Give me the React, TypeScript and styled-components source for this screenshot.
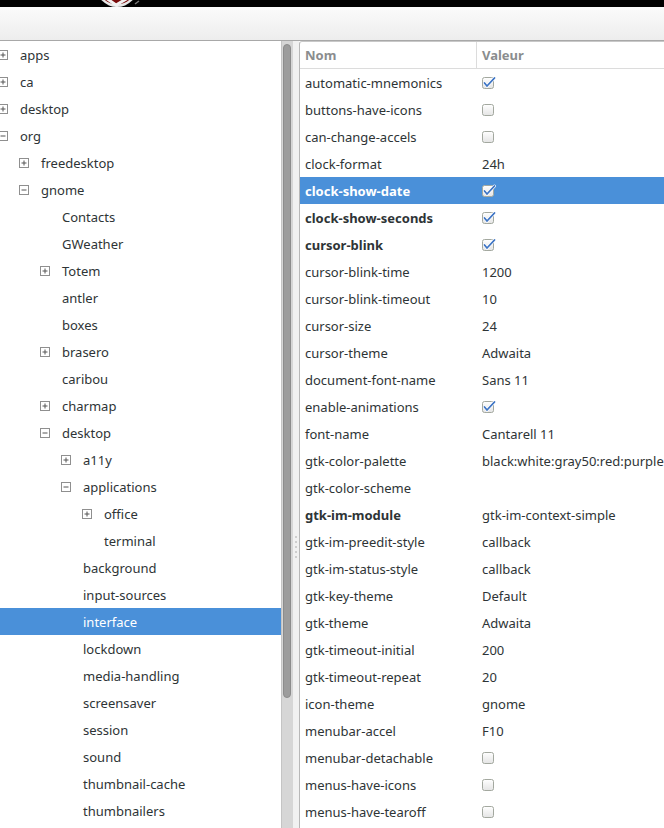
import React from 'react';
import styled, { createGlobalStyle } from 'styled-components';

const GlobalStyle = createGlobalStyle`
  html, body {
    margin: 0;
    padding: 0;
    background: #ffffff;
  }
  body {
    font-family: "Noto Sans", "DejaVu Sans", sans-serif;
    font-size: 13px;
    color: #2e3436;
    overflow: hidden;
  }
`;

type TreeNode = {
  label: string;
  level: number;
  expander?: 'plus' | 'minus';
  selected?: boolean;
};

const treeData: TreeNode[] = [
  { label: 'apps', level: 0, expander: 'plus' },
  { label: 'ca', level: 0, expander: 'plus' },
  { label: 'desktop', level: 0, expander: 'plus' },
  { label: 'org', level: 0, expander: 'minus' },
  { label: 'freedesktop', level: 1, expander: 'plus' },
  { label: 'gnome', level: 1, expander: 'minus' },
  { label: 'Contacts', level: 2 },
  { label: 'GWeather', level: 2 },
  { label: 'Totem', level: 2, expander: 'plus' },
  { label: 'antler', level: 2 },
  { label: 'boxes', level: 2 },
  { label: 'brasero', level: 2, expander: 'plus' },
  { label: 'caribou', level: 2 },
  { label: 'charmap', level: 2, expander: 'plus' },
  { label: 'desktop', level: 2, expander: 'minus' },
  { label: 'a11y', level: 3, expander: 'plus' },
  { label: 'applications', level: 3, expander: 'minus' },
  { label: 'office', level: 4, expander: 'plus' },
  { label: 'terminal', level: 4 },
  { label: 'background', level: 3 },
  { label: 'input-sources', level: 3 },
  { label: 'interface', level: 3, selected: true },
  { label: 'lockdown', level: 3 },
  { label: 'media-handling', level: 3 },
  { label: 'screensaver', level: 3 },
  { label: 'session', level: 3 },
  { label: 'sound', level: 3 },
  { label: 'thumbnail-cache', level: 3 },
  { label: 'thumbnailers', level: 3 },
];

type KeyRow = {
  name: string;
  value?: string;
  check?: boolean;
  bold?: boolean;
  selected?: boolean;
};

const keyData: KeyRow[] = [
  { name: 'automatic-mnemonics', check: true },
  { name: 'buttons-have-icons', check: false },
  { name: 'can-change-accels', check: false },
  { name: 'clock-format', value: '24h' },
  { name: 'clock-show-date', check: true, bold: true, selected: true },
  { name: 'clock-show-seconds', check: true, bold: true },
  { name: 'cursor-blink', check: true, bold: true },
  { name: 'cursor-blink-time', value: '1200' },
  { name: 'cursor-blink-timeout', value: '10' },
  { name: 'cursor-size', value: '24' },
  { name: 'cursor-theme', value: 'Adwaita' },
  { name: 'document-font-name', value: 'Sans 11' },
  { name: 'enable-animations', check: true },
  { name: 'font-name', value: 'Cantarell 11' },
  {
    name: 'gtk-color-palette',
    value:
      'black:white:gray50:red:purple:blue:light blue:green:yellow:orange:lavender:brown:goldenrod4:dodger blue:pink:light green:gray10:gray30:gray75:gray90',
  },
  { name: 'gtk-color-scheme', value: '' },
  { name: 'gtk-im-module', value: 'gtk-im-context-simple', bold: true },
  { name: 'gtk-im-preedit-style', value: 'callback' },
  { name: 'gtk-im-status-style', value: 'callback' },
  { name: 'gtk-key-theme', value: 'Default' },
  { name: 'gtk-theme', value: 'Adwaita' },
  { name: 'gtk-timeout-initial', value: '200' },
  { name: 'gtk-timeout-repeat', value: '20' },
  { name: 'icon-theme', value: 'gnome' },
  { name: 'menubar-accel', value: 'F10' },
  { name: 'menubar-detachable', check: false },
  { name: 'menus-have-icons', check: false },
  { name: 'menus-have-tearoff', check: false },
];

const Window = styled.div`
  width: 664px;
  height: 828px;
  display: flex;
  flex-direction: column;
  overflow: hidden;
`;

const TopBar = styled.div`
  height: 7px;
  background: #000000;
  display: flex;
  padding-left: 97px;
  flex-shrink: 0;
`;

const Toolbar = styled.div`
  height: 33px;
  flex-shrink: 0;
  background: linear-gradient(to bottom, #fbfbfb, #ededed);
  border-bottom: 1px solid #a8a8a8;
`;

const Main = styled.div`
  flex: 1;
  display: flex;
  min-height: 0;
`;

const LeftPane = styled.div`
  width: 293px;
  display: flex;
  flex-shrink: 0;
`;

const Tree = styled.div`
  width: 281px;
  display: flex;
  flex-direction: column;
  overflow: hidden;
`;

const TreeRow = styled.div<{ $level: number; $selected?: boolean }>`
  height: 27px;
  flex-shrink: 0;
  display: flex;
  align-items: center;
  padding-left: ${p => p.$level * 21}px;
  background: ${p => (p.$selected ? '#4a90d9' : 'transparent')};
  color: ${p => (p.$selected ? '#ffffff' : '#2e3436')};
  white-space: nowrap;
`;

const ExpanderSlot = styled.div`
  width: 10px;
  height: 10px;
  margin-left: -2px;
  margin-right: 12px;
  flex-shrink: 0;
  display: flex;
`;

const Scrollbar = styled.div`
  width: 12px;
  background: #d6d6d6;
  border-left: 1px solid #c4c4c4;
  box-sizing: border-box;
  padding: 3px 2px 0 1px;
  display: flex;
  flex-direction: column;
`;

const Thumb = styled.div`
  height: 652px;
  background: #9c9c9c;
  border: 1px solid #8c8c8c;
  border-radius: 4px;
`;

const Handle = styled.div`
  width: 6px;
  flex-shrink: 0;
  background: #f1f1f1;
  display: flex;
  flex-direction: column;
  align-items: center;
  padding-top: 495px;
  gap: 3px;
  box-sizing: border-box;
`;

const GripDot = styled.span`
  width: 2px;
  height: 2px;
  background: #c2c2c2;
  border-radius: 1px;
`;

const RightPane = styled.div`
  flex: 1;
  min-width: 0;
  display: flex;
  flex-direction: column;
  border-left: 1px solid #b8b8b8;
  border-top: 1px solid #c8c8c8;
  border-top-left-radius: 3px;
  background: #ffffff;
  overflow: hidden;
`;

const HeaderRow = styled.div`
  height: 27px;
  flex-shrink: 0;
  display: flex;
  border-bottom: 1px solid #dcdcdc;
  box-sizing: border-box;
  color: #8a8d8e;
  font-weight: bold;
`;

const HeaderCell = styled.div<{ $width?: number }>`
  width: ${p => (p.$width ? `${p.$width}px` : 'auto')};
  flex: ${p => (p.$width ? '0 0 auto' : '1')};
  display: flex;
  align-items: center;
  padding-left: 5px;
  box-sizing: border-box;
  border-right: ${p => (p.$width ? '1px solid #dcdcdc' : 'none')};
`;

const KeyRowBox = styled.div<{ $selected?: boolean }>`
  height: 27px;
  flex-shrink: 0;
  display: flex;
  align-items: center;
  background: ${p => (p.$selected ? '#4a90d9' : 'transparent')};
  color: ${p => (p.$selected ? '#ffffff' : '#2e3436')};
  white-space: nowrap;
`;

const NameCell = styled.div<{ $bold?: boolean }>`
  width: 177px;
  flex-shrink: 0;
  padding-left: 5px;
  box-sizing: border-box;
  font-weight: ${p => (p.$bold ? 'bold' : 'normal')};
  overflow: hidden;
`;

const ValueCell = styled.div`
  flex: 1;
  min-width: 0;
  padding-left: 5px;
  display: flex;
  align-items: center;
  overflow: hidden;
`;

const Logo = () => (
  <svg width="44" height="7" viewBox="0 0 44 7">
    <circle cx="20" cy="-14" r="21" fill="#e8e8e8" />
    <circle cx="20" cy="-14" r="18.5" fill="#7a0a0a" />
    <path d="M9 -2 L19 5 L31 -2" stroke="#f2f2f2" strokeWidth="3" fill="none" />
    <path d="M38 4 L42 1" stroke="#777" strokeWidth="1.5" />
  </svg>
);

const Expander = ({ kind }: { kind: 'plus' | 'minus' }) => (
  <svg width="10" height="10" viewBox="0 0 10 10">
    <rect x="0.5" y="0.5" width="9" height="9" fill="#ffffff" stroke="#8f8f8f" />
    <path d="M2.5 5 H7.5" stroke="#555" strokeWidth="1" />
    {kind === 'plus' && <path d="M5 2.5 V7.5" stroke="#555" strokeWidth="1" />}
  </svg>
);

const CheckBox = ({ checked }: { checked: boolean }) => (
  <svg width="15" height="14" viewBox="0 0 15 14" style={{ overflow: 'visible' }}>
    <defs>
      <linearGradient id="cbg" x1="0" y1="0" x2="0" y2="1">
        <stop offset="0" stopColor="#ffffff" />
        <stop offset="1" stopColor="#e4e4e4" />
      </linearGradient>
    </defs>
    <rect x="0.5" y="1.5" width="11" height="11" rx="2" fill="url(#cbg)" stroke="#a3a89f" />
    {checked && (
      <>
        <path d="M2.5 7 L5 10 L12.5 2" stroke="#ffffff" strokeWidth="3" fill="none" strokeLinecap="round" />
        <path d="M2.5 7 L5 10 L12.5 2" stroke="#3d74c4" strokeWidth="1.8" fill="none" strokeLinecap="round" />
      </>
    )}
  </svg>
);

const App: React.FC = () => {
  return (
    <>
      <GlobalStyle />
      <Window>
        <TopBar>
          <Logo />
        </TopBar>
        <Toolbar />
        <Main>
          <LeftPane>
            <Tree>
              {treeData.map((node, i) => (
                <TreeRow key={i} $level={node.level} $selected={node.selected}>
                  <ExpanderSlot>{node.expander && <Expander kind={node.expander} />}</ExpanderSlot>
                  {node.label}
                </TreeRow>
              ))}
            </Tree>
            <Scrollbar>
              <Thumb />
            </Scrollbar>
          </LeftPane>
          <Handle>
            {[0, 1, 2, 3, 4].map(i => (
              <GripDot key={i} />
            ))}
          </Handle>
          <RightPane>
            <HeaderRow>
              <HeaderCell $width={177}>Nom</HeaderCell>
              <HeaderCell>Valeur</HeaderCell>
            </HeaderRow>
            {keyData.map((row, i) => (
              <KeyRowBox key={i} $selected={row.selected}>
                <NameCell $bold={row.bold}>{row.name}</NameCell>
                <ValueCell>
                  {row.check !== undefined ? <CheckBox checked={row.check} /> : row.value}
                </ValueCell>
              </KeyRowBox>
            ))}
          </RightPane>
        </Main>
      </Window>
    </>
  );
};

export default App;
